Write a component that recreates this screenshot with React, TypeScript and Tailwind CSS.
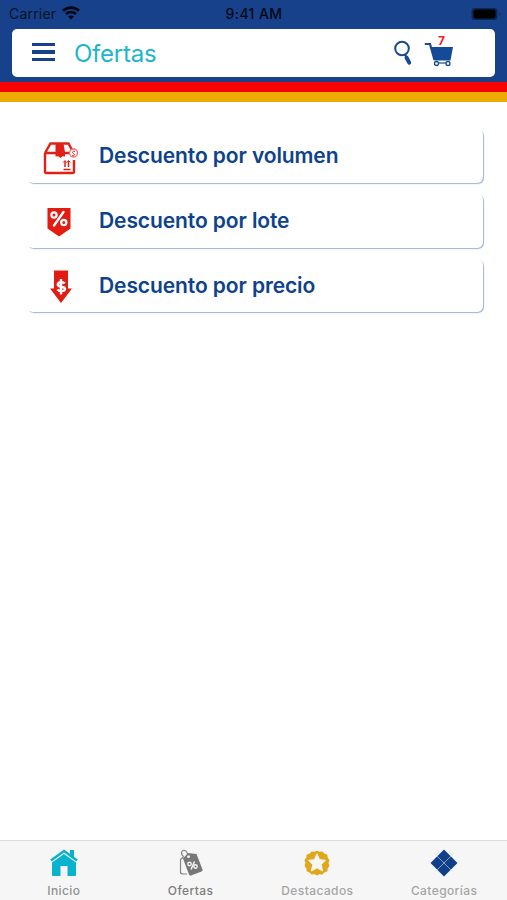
import type { ReactNode } from 'react'

const offers = [
  { label: 'Descuento por volumen', icon: <BoxIcon /> },
  { label: 'Descuento por lote', icon: <PercentTagIcon /> },
  { label: 'Descuento por precio', icon: <PriceDownIcon /> },
]

export default function App() {
  return (
    <div className="flex h-[900px] w-full flex-col overflow-hidden bg-white font-['Inter',sans-serif]">
      <header className="h-[82.4px] shrink-0 bg-[#17418a]">
        <StatusBar />
        <div className="mr-[12px] ml-[12px] flex h-12 items-center rounded-[5px] bg-white pl-5">
          <button aria-label="Menú" className="-mt-0.5 flex w-[23px] flex-col gap-1">
            <span className="h-[3.5px] bg-[#17418a]" />
            <span className="h-[3.5px] bg-[#17418a]" />
            <span className="h-[3.5px] bg-[#17418a]" />
          </button>
          <h1 className="mt-px ml-[19px] text-[24px] leading-none tracking-[-0.25px] text-[#1cb6ca]">Ofertas</h1>
          <SearchIcon />
          <Cart count={7} />
        </div>
      </header>
      <div className="h-[10px] shrink-0 bg-[#fb0000]" />
      <div className="h-[10px] shrink-0 bg-[#edab00]" />

      <main className="flex flex-1 flex-col gap-[11px] pt-[26.600px] pr-[24px] pl-[27px]">
        {offers.map((offer) => (
          <OfferRow key={offer.label} label={offer.label} icon={offer.icon} />
        ))}
      </main>

      <nav className="grid h-[60px] shrink-0 grid-cols-4 border-t border-[#dcdcdc] bg-[#f6f6f6]">
        <Tab label="Inicio" icon={<HomeIcon />} color="text-[#919191]" />
        <Tab label="Ofertas" icon={<TagsIcon />} color="text-[#7d7d7d]" />
        <Tab label="Destacados" icon={<StarBadgeIcon />} color="text-[#a5a5a5]" />
        <Tab label="Categorías" icon={<DiamondsIcon />} color="text-[#a5a5a5]" />
      </nav>
    </div>
  )
}

function StatusBar() {
  return (
    <div className="grid h-[29px] grid-cols-3 items-center pr-[5px] pb-px pl-[9px] text-black">
      <div className="flex items-center gap-[6px]">
        <span className="text-[14px] leading-none tracking-[0.2px] text-[#061126]">Carrier</span>
        <svg className="-mt-0.5" width="18" height="14" viewBox="0 0 18 14" fill="none" aria-hidden="true">
          <path d="M1 4.8C5.5.6 12.5.6 17 4.8" stroke="#020713" strokeWidth="2.6" />
          <path d="M4 8c3-2.6 7-2.6 10 0" stroke="#020713" strokeWidth="2.5" />
          <path d="M9 13.4 6.1 10.6c1.7-1.5 4.1-1.5 5.8 0Z" fill="#020713" />
        </svg>
      </div>
      <span className="-ml-[3px] text-center text-[14px] leading-none font-medium tracking-[0.4px] whitespace-nowrap text-[#020713]">
        9:41 AM
      </span>
      <svg className="-mt-px justify-self-end" width="31" height="14" viewBox="0 0 31 14" aria-hidden="true">
        <rect x=".5" y="1" width="26" height="12" rx="3.5" fill="#0c2753" />
        <rect x="2.5" y="2.5" width="22" height="9" rx="2" fill="#000" />
        <path d="M28 5v4c2-.5 2-3.500 0-4Z" fill="#12336d" />
      </svg>
    </div>
  )
}

function SearchIcon() {
  return (
    <svg className="-mt-px ml-auto" width="20" height="26" viewBox="0 0 20 26" fill="none" aria-hidden="true">
      <circle cx="9" cy="8.500" r="6.800" stroke="#174a91" strokeWidth="2" />
      <path d="m12 14.500 1.500 3" stroke="#174a91" strokeWidth="2" />
      <path d="m13.500 17.500 2.700 5.200" stroke="#174a91" strokeWidth="4" strokeLinecap="round" />
    </svg>
  )
}

function Cart({ count }: { count: number }) {
  return (
    <div className="relative mr-[41px] ml-[11px] h-[32px] w-[30px]">
      <svg className="-mt-[2px]" width="30" height="32" viewBox="0 0 30 32" fill="none" aria-hidden="true">
        <path d="M.8 9h5.200L10.500 25" stroke="#174a91" strokeWidth="2.200" />
        <path d="M7 12h22l-2.500 13.500H10.500Z" fill="#134b98" />
        <path d="M14 28h8" stroke="#174a91" strokeWidth="1.200" />
        <circle cx="12.500" cy="28.500" r="2" fill="#fff" stroke="#174a91" strokeWidth="1.300" />
        <circle cx="24" cy="28.500" r="2" fill="#fff" stroke="#174a91" strokeWidth="1.300" />
      </svg>
      <span className="absolute -top-[2px] left-[14px] text-[12px] leading-none font-bold text-[#f51e28]">{count}</span>
    </div>
  )
}

function OfferRow({ label, icon }: { label: string; icon: ReactNode }) {
  return (
    <button className="flex h-[53.800px] items-center rounded-md bg-white pl-[14px] text-left shadow-[1px_1px_1px_#a6b0dc]">
      <span className="mt-1 flex w-[38px] justify-center">{icon}</span>
      <span className="ml-[20px] text-[21px] leading-none font-semibold tracking-[-0.1px] text-[#0d428c]">{label}</span>
    </button>
  )
}

function BoxIcon() {
  return (
    <svg className="ml-[2px] shrink-0" width="36" height="34" viewBox="0 0 36 34" fill="none" aria-hidden="true">
      <path d="M2 12v18.500c0 1 .5 1.500 1.500 1.500h26c1 0 1.500-.5 1.500-1.500V19M2 12 7.500 2.500h18L29 9M2 12h24" stroke="#e12018" strokeWidth="2.400" />
      <path d="M12.500 2.500h8l1.500 8.500v4.500l-2.500-.3-2 1.800-2.500-1.800-2.500.3v-4.500Z" fill="#e12018" />
      <path d="M22 20v6m3.500-6v6m-5 2.500h7" stroke="#e12018" strokeWidth="1.500" />
      <path d="m20 21.500 2-2 1.500 2m.5 0 1.500-2 2 2" stroke="#e12018" />
      <circle cx="30.500" cy="12" r="4" fill="#fff" stroke="#ef6d68" strokeWidth="1.300" />
      <path d="M32 10.500c-2-1-3.500 1-1.500 2s.5 3-1.500 2" stroke="#e12018" strokeWidth="1" />
    </svg>
  )
}

function PercentTagIcon() {
  return (
    <svg className="-ml-[2px]" width="24" height="30" viewBox="0 0 24 30" fill="none" aria-hidden="true">
      <path d="M.5 0h23v20.500L12 28.500 .5 20.500Z" fill="#e31c12" />
      <path d="m7 17.500 9.500-13.500" stroke="#fff" strokeWidth="2.400" strokeLinecap="round" />
      <circle cx="7" cy="7" r="2.600" stroke="#fff" strokeWidth="2.200" />
      <circle cx="16.800" cy="14.500" r="2.600" stroke="#fff" strokeWidth="2.200" />
    </svg>
  )
}

function PriceDownIcon() {
  return (
    <svg className="ml-[2px]" width="22" height="34" viewBox="0 0 22 34" fill="none" aria-hidden="true">
      <path d="M4 .5h14v18h4L11 33 0 18.500h4Z" fill="#e31c12" />
      <path d="M14.800 13.500c-1.200-1.500-6.800-2-7 1s7.500 1.500 7.200 4.500-6.200 2.500-7.600.5M11 9v15.500" stroke="#fff" strokeWidth="2.400" />
    </svg>
  )
}

function Tab({ label, icon, color }: { label: string; icon: ReactNode; color: string }) {
  return (
    <button className="flex flex-col items-center pt-[7px] pl-[1px]">
      <span className="flex h-[30px] items-center justify-center">{icon}</span>
      <span className={`mt-[6px] text-[12px] leading-[14px] font-medium tracking-[0.4px] ${color}`}>{label}</span>
    </button>
  )
}

function HomeIcon() {
  return (
    <svg width="28" height="28" viewBox="0 0 28 28" fill="none" aria-hidden="true">
      <path d="M1 11.500 14 2l13 9.500" stroke="#09b3cd" strokeWidth="2.500" />
      <path d="M20 1h4v8l-4-3Z" fill="#09b3cd" />
      <path d="m14 5 12 8.500v12c0 1-.5 1.500-1.500 1.500H17.500V17h-7v10H3.500C2.500 27 2 26.500 2 25.500v-12Z" fill="#09b3cd" />
    </svg>
  )
}

function TagsIcon() {
  return (
    <svg width="24" height="28" viewBox="0 0 24 28" fill="none" aria-hidden="true">
      <path d="M4.500 8 1.500 10.500V23c0 1.500 1 2 2.500 2h4" stroke="#858585" strokeWidth="1.200" />
      <path d="M4 9.500 9 4l8.500 1L23.500 20.500c.3 1-.1 1.500-1 2L12 26.500c-1 .4-1.500 0-2-1Z" fill="#787878" />
      <circle cx="9.500" cy="7.500" r="1.500" fill="#f6f6f6" />
      <path d="M9 7C8-.5 3 .5 2.500 3.500c0 2 1 3.500 2.500 4" stroke="#858585" strokeWidth="1.200" />
      <path d="m12 20.500 3.500-8" stroke="#f6f6f6" strokeWidth="1.500" />
      <circle cx="10.500" cy="15" r="1.700" stroke="#f6f6f6" strokeWidth="1.400" />
      <circle cx="16.500" cy="17.500" r="1.700" stroke="#f6f6f6" strokeWidth="1.400" />
    </svg>
  )
}

function StarBadgeIcon() {
  return (
    <svg width="26" height="26" viewBox="0 0 26 26" aria-hidden="true">
      <path
        d="m13 .5 2.300 1.300 3.200-.3 1.800 2 3.100 1.200.2 2.800 1.900 2.500-1 3 1 3-1.900 2.500-.2 2.800-3.100 1.200-1.800 2-3.200-.3-2.300 1.300-2.300-1.300-3.200.3-1.800-2-3.100-1.200-.2-2.800-1.900-2.500 1-3-1-3 1.900-2.500.2-2.800 3.100-1.200 1.800-2 3.200.3Z"
        fill="#dfa71a"
      />
      <path d="m13 3.800 2.600 5.900 6 .6-4.500 4.200 1.600 6.500-5.700-3.200L7.300 21l1.600-6.500-4.500-4.200 6-.6Z" fill="#f6f6f6" stroke="#f6f6f6" strokeWidth="1" />
    </svg>
  )
}

function DiamondsIcon() {
  return (
    <svg width="28" height="28" viewBox="0 0 28 28" aria-hidden="true">
      <path d="m14 .5 13.500 13.500L14 27.500.5 14Z" fill="#114088" />
      <path d="m7 7 14 14M21 7 7 21" stroke="#879fc5" strokeWidth="1" />
    </svg>
  )
}
